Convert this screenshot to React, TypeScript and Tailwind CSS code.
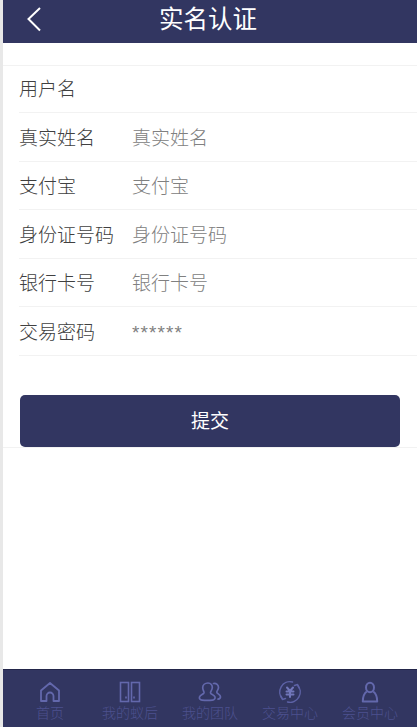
const rows = [
  { label: '用户名', value: '' },
  { label: '真实姓名', value: '真实姓名' },
  { label: '支付宝', value: '支付宝' },
  { label: '身份证号码', value: '身份证号码' },
  { label: '银行卡号', value: '银行卡号' },
  { label: '交易密码', value: '******' },
];

function BackIcon() {
  return (
    <svg width="16" height="26" viewBox="0 0 16 26" fill="none" stroke="#ffffff" strokeWidth="2">
      <path d="M14 2 2.500 13 14 24.500" />
    </svg>
  );
}

function HomeIcon() {
  return (
    <svg width="22" height="22" viewBox="0 0 22 22" fill="none" stroke="#6368ac" strokeWidth="1.8" strokeLinejoin="round">
      <path d="M2 9.500 11 2l9 7.500V20h-5.500v-5a3.500 3.500 0 0 0-7 0v5H2z" />
    </svg>
  );
}

function BookIcon() {
  return (
    <svg width="22" height="22" viewBox="0 0 22 22" fill="none" stroke="#6368ac" strokeWidth="1.6">
      <rect x="1.500" y="1.500" width="8" height="19" />
      <rect x="12.500" y="1.500" width="8" height="19" />
      <path d="M7 15.500v2M15 15.500v2" />
    </svg>
  );
}

function TeamIcon() {
  return (
    <svg width="24" height="22" viewBox="0 0 24 22" fill="none" stroke="#6368ac" strokeWidth="1.700" strokeLinecap="round">
      <path d="M10 2c3 0 4.500 2.200 4.300 4.800-.2 2.500-2 3.600-1.800 5 .2 1.600 3.800 1.700 4.500 4.200.4 1.500-.7 3-2.500 3.200-3 .3-7.500.3-10.500 0C2 19 1 17.500 1.500 16c.8-2.300 4-2.500 4.500-4.200.3-1.300-1.300-2.600-1.300-5C4.700 4 7 2 10 2z" />
      <path d="M15.500 2.500c3-.5 5 1.500 5 4 0 2.200-1.700 3.300-1.700 4.700 0 1.500 3.700 2 3.700 4.600 0 1.300-1 2.200-2.500 2.400" />
    </svg>
  );
}

function TradeIcon() {
  return (
    <svg width="24" height="24" viewBox="0 0 24 24" fill="none" stroke="#5d62a6" strokeWidth="1.500" strokeLinecap="round" strokeLinejoin="round">
      <path d="M14.500 2A10.300 10.300 0 0 0 4.500 19" />
      <path d="M9.500 22A10.300 10.300 0 0 0 19.500 5" />
      <path d="M3 16 4.500 19.500 7.500 18.500M21 8 19.500 4.500 16.500 5.500" />
      <path d="M9 7.500 12 11l3-3.500M8.500 11.500h7M8.500 14.500h7M12 11v6" strokeWidth="2" stroke="#7176ba" />
    </svg>
  );
}

function UserIcon() {
  return (
    <svg width="22" height="22" viewBox="0 0 22 22" fill="none" stroke="#6368ac" strokeWidth="2" strokeLinejoin="round">
      <ellipse cx="11" cy="6.500" rx="4" ry="4.800" />
      <path d="M7.800 10.500C5 12.500 3.800 15 3.800 20.500h14.400c0-5.500-1.200-8-4-10" />
    </svg>
  );
}

const tabs = [
  { label: '首页', icon: <HomeIcon /> },
  { label: '我的蚁后', icon: <BookIcon /> },
  { label: '我的团队', icon: <TeamIcon /> },
  { label: '交易中心', icon: <TradeIcon /> },
  { label: '会员中心', icon: <UserIcon /> },
];

export default function App() {
  return (
    <div
      className="flex h-[727px] w-[417px] overflow-hidden bg-white"
      style={{ fontFamily: '"Liberation Sans", "Noto Sans CJK SC", sans-serif' }}
    >
      <div className="w-[3px] shrink-0 bg-[#e8e8e8]" />
      <div className="flex min-w-0 flex-1 flex-col">
        <header className="flex h-[43px] shrink-0 items-center bg-[#323661] pl-[23px] text-white">
          <div className="-translate-y-[3px]">
            <BackIcon />
          </div>
          <h1 className="ml-[117px] -translate-y-[1px] text-[24.500px] leading-none">实名认证</h1>
        </header>

        <div className="mt-[22px] border-t border-[#f2f2f2] pl-[16px]">
          <div className="-mt-[1.500px]">
            {rows.map((row) => (
              <div key={row.label} className="flex h-[48.500px] items-center border-b border-[#f2f2f2] pt-[4px] text-[19px] font-light">
                <span className="w-[113px] shrink-0 text-[#404040]">{row.label}</span>
                <span className={row.value === '******' ? 'tracking-[1.100px] text-[#808080]' : 'text-[#808080]'}>{row.value}</span>
              </div>
            ))}
          </div>
        </div>

        <div className="border-b border-[#f2f2f2] px-[17px] pt-[39.500px]">
          <button className="flex h-[52px] w-[380px] items-center justify-center rounded-[5px] bg-[#323661] pt-[3px] text-[19px] text-white">
            提交
          </button>
        </div>

        <div className="flex-1" />

        <nav className="flex h-[58px] shrink-0 items-start justify-around border-t border-[#23264a] bg-[#323661] px-[7px] pt-[10px]">
          {tabs.map((tab) => (
            <div key={tab.label} className="flex w-[80px] flex-col items-center">
              <div className="flex h-[24px] items-center justify-center">{tab.icon}</div>
              <span className="mt-[1px] text-[14px] font-light leading-[17px] text-[#4d518f]">{tab.label}</span>
            </div>
          ))}
        </nav>
      </div>
    </div>
  );
}
